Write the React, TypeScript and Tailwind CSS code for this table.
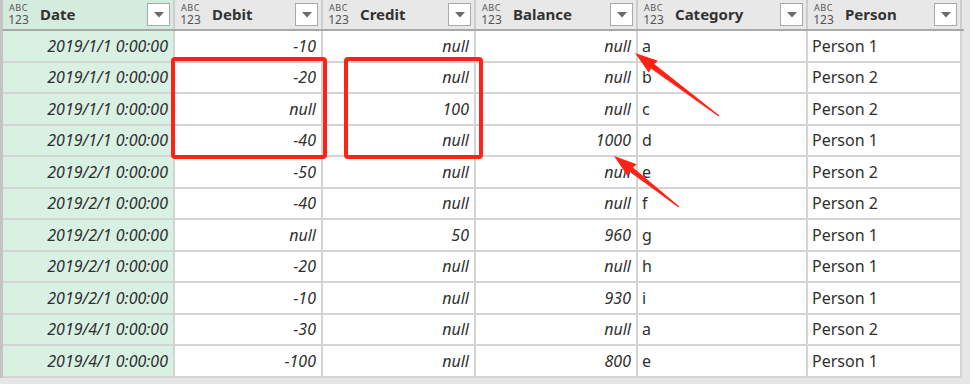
import React from "react";

type Row = [string, string, string, string, string, string];

const rows: Row[] = [
  ["2019/1/1 0:00:00", "-10", "null", "null", "a", "Person 1"],
  ["2019/1/1 0:00:00", "-20", "null", "null", "b", "Person 2"],
  ["2019/1/1 0:00:00", "null", "100", "null", "c", "Person 2"],
  ["2019/1/1 0:00:00", "-40", "null", "1000", "d", "Person 1"],
  ["2019/2/1 0:00:00", "-50", "null", "null", "e", "Person 2"],
  ["2019/2/1 0:00:00", "-40", "null", "null", "f", "Person 2"],
  ["2019/2/1 0:00:00", "null", "50", "960", "g", "Person 1"],
  ["2019/2/1 0:00:00", "-20", "null", "null", "h", "Person 1"],
  ["2019/2/1 0:00:00", "-10", "null", "930", "i", "Person 1"],
  ["2019/4/1 0:00:00", "-30", "null", "null", "a", "Person 2"],
  ["2019/4/1 0:00:00", "-100", "null", "800", "e", "Person 1"],
];

const headers = ["Date", "Debit", "Credit", "Balance", "Category", "Person"];

function TypeIcon() {
  return (
    <div className="flex flex-col items-center gap-[1px] text-[#555] w-[21px] shrink-0">
      <span className="text-[9px] leading-[10px] h-[10px] tracking-[0.5px]">ABC</span>
      <span className="text-[12px] leading-[12px] h-[12px]">123</span>
    </div>
  );
}

function Dropdown() {
  return (
    <div className="w-[23px] h-[23px] border border-[#a9a9a9] bg-white flex items-center justify-center shrink-0">
      <svg width="10" height="6" viewBox="0 0 10 6">
        <polygon points="0,0 10,0 5,5.5" fill="#6b6b6b" />
      </svg>
    </div>
  );
}

function arrowPoints(tx: number, ty: number, sx: number, sy: number) {
  const dx = tx - sx;
  const dy = ty - sy;
  const len = Math.hypot(dx, dy);
  const ux = dx / len;
  const uy = dy / len;
  const nx = -uy;
  const ny = ux;
  const headLen = 22;
  const bx = tx - ux * headLen;
  const by = ty - uy * headLen;
  const p = (x: number, y: number) => `${x.toFixed(1)},${y.toFixed(1)}`;
  return [
    p(sx + nx * 0.6, sy + ny * 0.6),
    p(bx + nx * 2.8, by + ny * 2.8),
    p(bx + nx * 7.5 + ux * -1, by + ny * 7.5 + uy * -1),
    p(tx, ty),
    p(bx - nx * 7.5 + ux * -1, by - ny * 7.5 + uy * -1),
    p(bx - nx * 2.8, by - ny * 2.8),
    p(sx - nx * 0.6, sy - ny * 0.6),
  ].join(" ");
}

export default function App() {
  return (
    <div
      className="relative w-[970px] h-[384px] bg-[#e6e6e6] overflow-hidden text-[16px] text-[#303030]"
      style={{ fontFamily: '"Noto Sans", "Open Sans", sans-serif' }}
    >
      <div className="w-[964px] border-l-[3px] border-[#c4c4c4]">
        {/* header */}
        <div className="grid grid-cols-[172px_148px_153px_162px_170px_154px] h-[31px] border-b-2 border-[#a8a8a8]">
          {headers.map((h, i) => (
            <div
              key={h}
              className={`flex items-center pl-[5px] pr-[3px] border-r-2 border-[#cdcdcd] ${
                i === 0 ? "bg-[#d3ecdd]" : "bg-[#e8e8e8]"
              }`}
            >
              <TypeIcon />
              <span className="ml-[11px] font-bold text-[15px] text-[#333] flex-1">{h}</span>
              <Dropdown />
            </div>
          ))}
        </div>
        {/* body */}
        {rows.map((r, ri) => (
          <div
            key={ri}
            className="grid grid-cols-[172px_148px_153px_162px_170px_154px] h-[31.5px]"
          >
            {r.map((c, ci) => {
              const numeric = ci <= 3;
              return (
                <div
                  key={ci}
                  className={`flex items-center border-r-2 border-b-2 border-[#d4d4d4] ${
                    ci === 0 ? "bg-[#d9f1e3]" : "bg-white"
                  } ${
                    numeric
                      ? "justify-end pr-[5px] italic"
                      : "justify-start pl-[4px]"
                  }`}
                >
                  {c}
                </div>
              );
            })}
          </div>
        ))}
      </div>

      {/* red highlight boxes */}
      <div className="absolute left-[171px] top-[57px] w-[156px] h-[102px] border-4 border-[#ff2216] rounded-[4px]" />
      <div className="absolute left-[344px] top-[57px] w-[139px] h-[102px] border-4 border-[#ff2216] rounded-[4px]" />

      {/* arrows */}
      <svg
        className="absolute left-0 top-0 pointer-events-none"
        width="970"
        height="384"
        viewBox="0 0 970 384"
      >
        <polygon points={arrowPoints(635, 53, 719, 116)} fill="#ff2216" />
        <polygon points={arrowPoints(614, 156, 679, 207)} fill="#ff2216" />
      </svg>
    </div>
  );
}
